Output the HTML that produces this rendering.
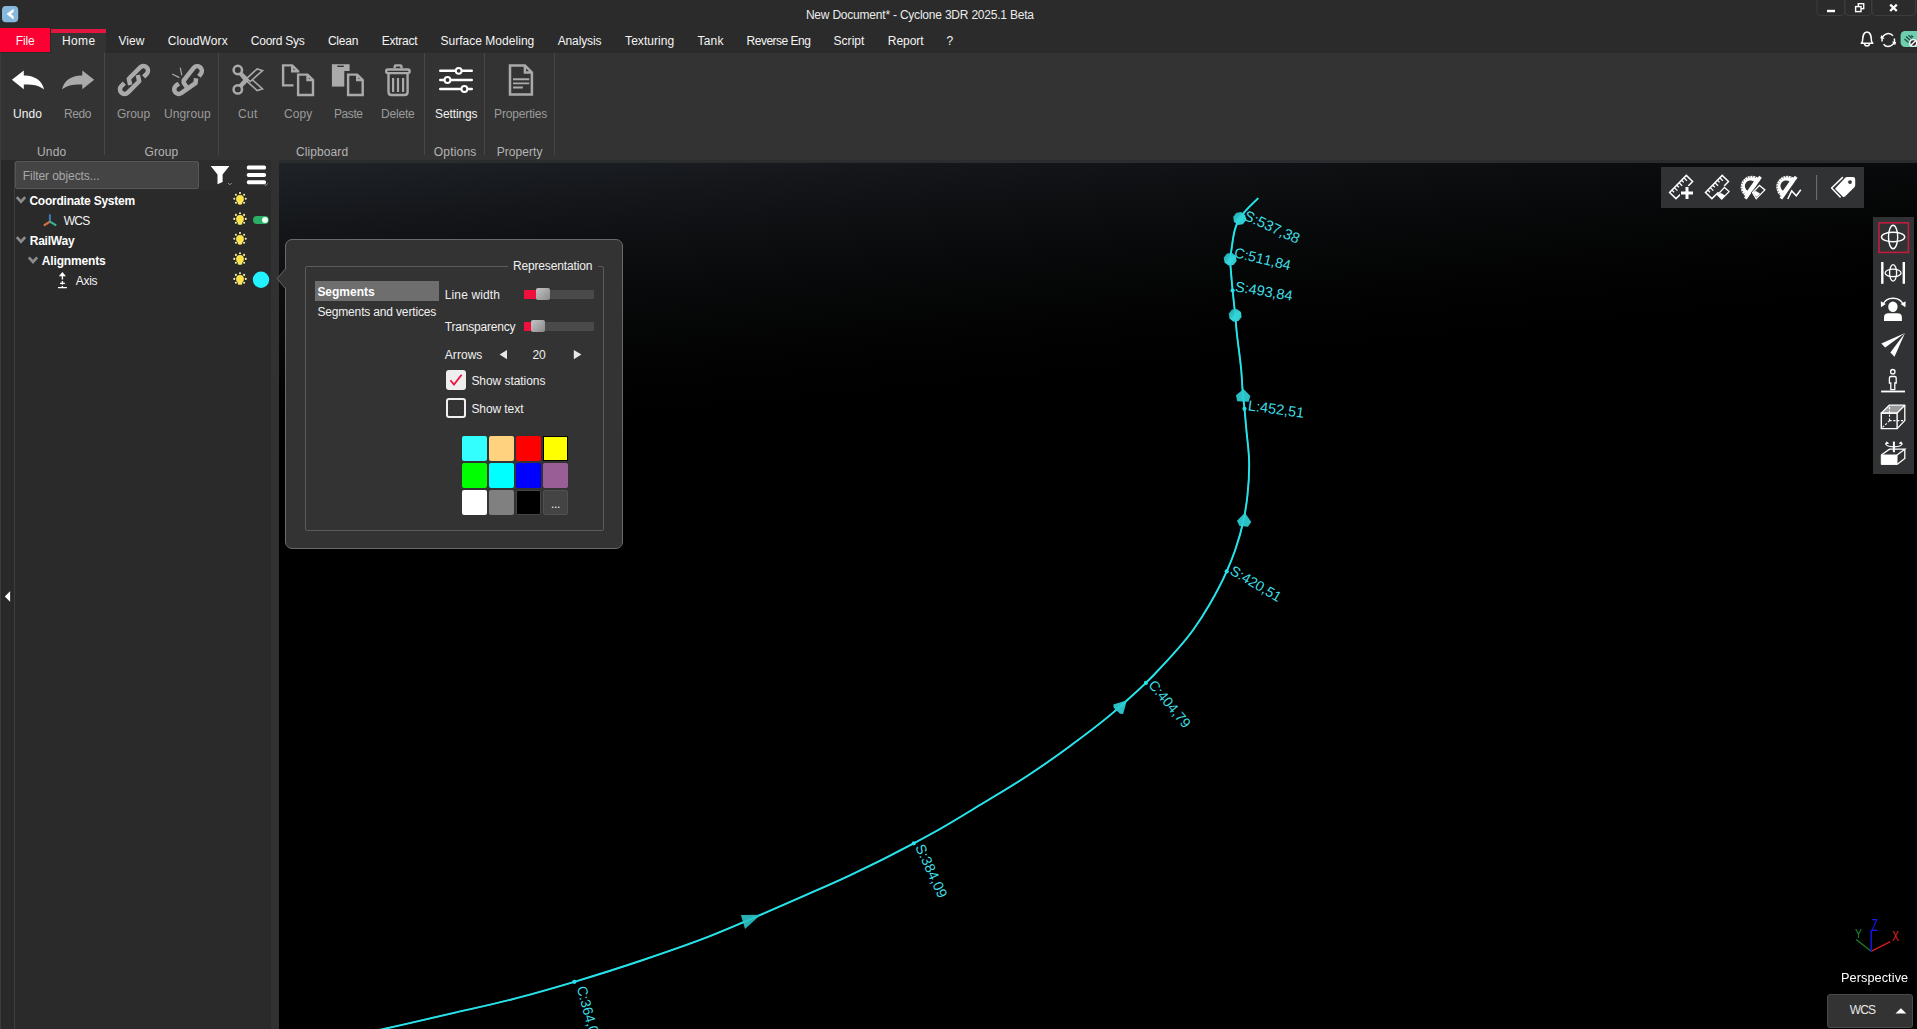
<!DOCTYPE html>
<html lang="en"><head><meta charset="utf-8"><title>New Document* - Cyclone 3DR 2025.1 Beta</title>
<style>
html,body{margin:0;padding:0;background:#000;}
body{width:1917px;height:1029px;position:relative;overflow:hidden;font-family:'Liberation Sans',sans-serif;font-size:12px;}
.a{position:absolute;}
.t{position:absolute;white-space:pre;line-height:normal;}
#titlebar{left:0;top:0;width:1917px;height:53px;background:#2b2b2b;}
#ribbon{left:0;top:53px;width:1917px;height:107px;background:#333333;}
#ribstrip{left:0;top:160px;width:1917px;height:3px;background:#2b2c2d;}
#filetab{left:0;top:28px;width:50px;height:24px;background:#fb0032;}
#hometab{left:51px;top:29px;width:55px;height:24px;background:#333333;}
#homebar{left:51px;top:29px;width:55px;height:4px;background:#e2163f;}
.sep{position:absolute;top:53px;width:1px;height:102px;background:#474747;}
#leftstrip{left:0;top:160px;width:15px;height:869px;background:#292929;}
#leftedge{left:0;top:53px;width:1px;height:976px;background:#3c3c3c;}
#leftline{left:14px;top:162px;width:1px;height:867px;background:#3e3e3e;}
#tree{left:15px;top:160px;width:256px;height:869px;background:#2a2a2a;}
#treehead{left:15px;top:160px;width:256px;height:30px;background:#2d2d2d;}
#splitter{left:271px;top:160px;width:8px;height:869px;background:#313131;}
#filter{left:15px;top:161px;width:184px;height:28px;background:#444444;border:1px solid #565656;box-sizing:border-box;border-radius:2px;}
#viewport{left:279px;top:163px;width:1638px;height:866px;background:#000;overflow:hidden;}
#vpgrad{left:0;top:0;width:1638px;height:866px;background:linear-gradient(174.4deg,rgb(31,35,40) 0.00%,rgb(25,28,32) 3.26%,rgb(20,22,26) 6.52%,rgb(15,17,20) 9.78%,rgb(11,13,14) 13.04%,rgb(8,9,10) 16.30%,rgb(5,6,6) 19.56%,rgb(3,3,4) 22.82%,rgb(1,1,2) 26.08%,rgb(0,0,0) 29.34%,rgb(0,0,0) 32.60%);}
#toptools{left:1661px;top:167px;width:203px;height:41px;background:#313234;}
#righttools{left:1873px;top:217px;width:41px;height:257px;background:#313234;}
#selbox{display:none;}
#wcsbox{left:1827px;top:994px;width:86px;height:34px;background:#333333;border:1px solid #4a4a4a;box-sizing:border-box;border-radius:3px;}
#popup{left:285px;top:239px;width:338px;height:310px;background:#333333;border:1px solid #6a6a6a;box-sizing:border-box;border-radius:7px;}
#grp{left:305px;top:266px;width:299px;height:265px;border:1px solid #5c5c5c;box-sizing:border-box;border-radius:2px;}
#grpgap{left:508px;top:264px;width:90px;height:5px;background:#333333;}
#selitem{left:315px;top:281px;width:124px;height:20px;background:#6e6e6e;}
.track{position:absolute;height:9px;background:#4a4a4a;border-radius:1px;}
.fill{position:absolute;height:9px;background:#f0103c;}
.knob{position:absolute;width:14px;height:12px;border-radius:2px;background:linear-gradient(135deg,#c4c4c4,#8a8a8a);}
.sw{position:absolute;width:25px;height:25px;border-radius:2px;box-sizing:border-box;}
#cb1{left:446px;top:370px;width:20px;height:20px;background:#eeeeee;border-radius:3px;}
#cb2{left:446px;top:398px;width:20px;height:20px;border:2px solid #f0f0f0;box-sizing:border-box;border-radius:3px;}
svg{position:absolute;left:0;top:0;overflow:visible;}

</style></head>
<body>
<div class="a" id="titlebar"></div>
<div class="a" id="filetab"></div>
<div class="a" id="hometab"></div>
<div class="a" id="homebar"></div>
<div class="a" id="ribbon"></div>
<div class="a" id="ribstrip"></div>
<div class="sep" style="left:104px"></div>
<div class="sep" style="left:218px"></div>
<div class="sep" style="left:424px"></div>
<div class="sep" style="left:484px"></div>
<div class="sep" style="left:554px"></div>
<div class="a" id="viewport"><div class="a" id="vpgrad"></div></div>
<div class="a" id="leftstrip"></div>
<div class="a" id="leftedge"></div>
<div class="a" id="tree"></div>
<div class="a" id="treehead"></div>
<div class="a" id="leftline"></div>
<div class="a" id="splitter"></div>
<div class="a" id="filter"></div>
<div class="a" id="toptools"></div>
<div class="a" id="righttools"></div>
<div class="a" id="selbox"></div>
<div class="a" id="wcsbox"></div>
<!--CURVE-->
<svg id="curve" width="1917" height="1029" viewBox="0 0 1917 1029"><defs><clipPath id="vpc"><rect x="279" y="163" width="1638" height="866"/></clipPath><linearGradient id="sph" x1="0" y1="0" x2="1" y2="1"><stop offset="0" stop-color="#1f9aa2"/><stop offset="0.55" stop-color="#34d6da"/><stop offset="1" stop-color="#2cc4ca"/></linearGradient></defs><g clip-path="url(#vpc)">
<path d="M1258.3,198.1 C1254.0,202.4 1249.3,206.4 1245.4,211.0 C1243.4,213.4 1241.2,215.8 1239.6,218.5 C1238.3,220.7 1237.2,223.2 1236.2,225.6 C1233.2,233.1 1232.7,241.4 1231.5,249.4 C1231.0,252.6 1230.3,255.8 1230.2,259.0 C1230.0,262.9 1230.6,266.7 1230.9,270.6 C1231.4,277.2 1232.0,283.9 1232.6,290.5 C1233.4,298.7 1234.4,306.8 1235.2,315.0 C1235.7,320.0 1236.0,325.0 1236.5,330.0 C1237.8,343.4 1240.0,356.6 1241.2,370.0 C1242.0,378.5 1242.2,387.1 1243.0,395.6 C1243.4,400.0 1244.0,404.3 1244.5,408.7 C1245.2,415.8 1245.8,422.9 1246.4,430.0 C1247.3,440.3 1248.9,450.7 1249.1,461.0 C1249.4,472.3 1248.7,483.7 1247.5,495.0 C1246.6,503.4 1245.3,511.8 1243.6,520.0 C1241.5,530.1 1238.6,540.2 1235.2,550.0 C1232.7,557.2 1229.8,564.4 1226.7,571.4 C1221.8,582.5 1216.1,593.2 1210.0,603.7 C1204.8,612.7 1199.2,621.6 1193.1,630.0 C1182.8,644.3 1170.6,657.2 1158.5,670.0 C1154.4,674.4 1150.2,678.7 1145.9,682.9 C1139.8,688.9 1133.4,694.6 1127.0,700.3 C1122.5,704.4 1118.0,708.4 1113.4,712.4 C1099.9,724.0 1085.5,734.6 1071.2,745.2 C1056.9,755.8 1042.4,766.0 1027.5,775.8 C1013.2,785.2 998.4,793.9 983.7,802.8 C969.2,811.6 954.8,820.6 940.0,829.0 C931.3,833.9 922.6,838.6 913.8,843.3 C892.8,854.5 871.5,865.2 850.0,875.3 C833.5,883.1 816.7,890.2 800.0,897.6 C784.7,904.4 769.4,911.1 754.0,917.7 C739.4,923.9 724.8,930.3 710.0,936.1 C687.9,944.8 665.4,952.4 642.9,960.0 C620.2,967.7 597.4,974.9 574.4,981.8 C553.5,988.0 532.6,994.1 511.5,999.5 C492.8,1004.3 473.9,1008.3 455.1,1012.6 C431.3,1018.1 407.6,1023.7 383.8,1029.0 C369.2,1032.2 354.6,1035.3 340.0,1038.5" fill="none" stroke="#27e3ea" stroke-width="1.9"/>
<polygon transform="translate(1239.6,218.5)" points="6.4,1.7 3.3,5.7 -1.7,6.4 -5.7,3.3 -6.4,-1.7 -3.3,-5.7 1.7,-6.4 5.7,-3.3" fill="url(#sph)"/>
<polygon transform="translate(1230.2,259.2)" points="6.4,1.7 3.3,5.7 -1.7,6.4 -5.7,3.3 -6.4,-1.7 -3.3,-5.7 1.7,-6.4 5.7,-3.3" fill="url(#sph)"/>
<polygon transform="translate(1235.2,315.3)" points="6.4,1.7 3.3,5.7 -1.7,6.4 -5.7,3.3 -6.4,-1.7 -3.3,-5.7 1.7,-6.4 5.7,-3.3" fill="url(#sph)"/>
<polygon transform="translate(1243.2,395.5) rotate(3)" points="0,-6.5 7.2,0.2 5.7,6 -5.7,6 -7.2,0.2" fill="#2cc0c6"/>
<polygon transform="translate(1244.3,519.7) rotate(5)" points="0,-7 7.2,1.8 4.2,6.7 -4.2,6.7 -7.2,1.8" fill="#2cc0c6"/>
<polygon transform="translate(1121.9,705.5) rotate(44)" points="0,-7.3 6.8,5.3 4.4,7.3 -4.4,7.3 -6.8,5.3" fill="#2cc0c6"/>
<polygon points="740.9,915.1 760.7,914.8 745,929.1" fill="#28b0b2"/>
<path d="M1258.3,198.1 C1254.0,202.4 1249.3,206.4 1245.4,211.0 C1243.4,213.4 1241.2,215.8 1239.6,218.5 C1238.3,220.7 1237.2,223.2 1236.2,225.6 C1233.2,233.1 1232.7,241.4 1231.5,249.4 C1231.0,252.6 1230.3,255.8 1230.2,259.0 C1230.0,262.9 1230.6,266.7 1230.9,270.6 C1231.4,277.2 1232.0,283.9 1232.6,290.5 C1233.4,298.7 1234.4,306.8 1235.2,315.0 C1235.7,320.0 1236.0,325.0 1236.5,330.0 C1237.8,343.4 1240.0,356.6 1241.2,370.0 C1242.0,378.5 1242.2,387.1 1243.0,395.6 C1243.4,400.0 1244.0,404.3 1244.5,408.7 C1245.2,415.8 1245.8,422.9 1246.4,430.0 C1247.3,440.3 1248.9,450.7 1249.1,461.0 C1249.4,472.3 1248.7,483.7 1247.5,495.0 C1246.6,503.4 1245.3,511.8 1243.6,520.0 C1241.5,530.1 1238.6,540.2 1235.2,550.0 C1232.7,557.2 1229.8,564.4 1226.7,571.4 C1221.8,582.5 1216.1,593.2 1210.0,603.7 C1204.8,612.7 1199.2,621.6 1193.1,630.0 C1182.8,644.3 1170.6,657.2 1158.5,670.0 C1154.4,674.4 1150.2,678.7 1145.9,682.9 C1139.8,688.9 1133.4,694.6 1127.0,700.3 C1122.5,704.4 1118.0,708.4 1113.4,712.4 C1099.9,724.0 1085.5,734.6 1071.2,745.2 C1056.9,755.8 1042.4,766.0 1027.5,775.8 C1013.2,785.2 998.4,793.9 983.7,802.8 C969.2,811.6 954.8,820.6 940.0,829.0 C931.3,833.9 922.6,838.6 913.8,843.3 C892.8,854.5 871.5,865.2 850.0,875.3 C833.5,883.1 816.7,890.2 800.0,897.6 C784.7,904.4 769.4,911.1 754.0,917.7 C739.4,923.9 724.8,930.3 710.0,936.1 C687.9,944.8 665.4,952.4 642.9,960.0 C620.2,967.7 597.4,974.9 574.4,981.8 C553.5,988.0 532.6,994.1 511.5,999.5 C492.8,1004.3 473.9,1008.3 455.1,1012.6 C431.3,1018.1 407.6,1023.7 383.8,1029.0 C369.2,1032.2 354.6,1035.3 340.0,1038.5" fill="none" stroke="#27e3ea" stroke-width="1.6" opacity="0.55"/>
<circle cx="1232.6" cy="290.5" r="2.1" fill="#27e3ea"/>
<circle cx="1244.5" cy="408.8" r="2.1" fill="#27e3ea"/>
<circle cx="1226.7" cy="571.4" r="2.1" fill="#27e3ea"/>
<circle cx="1145.9" cy="682.9" r="2.1" fill="#27e3ea"/>
<circle cx="913.8" cy="843.3" r="2.1" fill="#27e3ea"/>
<circle cx="574.4" cy="981.8" r="2.1" fill="#27e3ea"/>
<text transform="translate(1243.1,219.2) rotate(24.8)" font-family="'Liberation Sans',sans-serif" font-size="14.8" fill="#3fdde3" style="font-kerning:none">S:537,38</text>
<text transform="translate(1233.5,257.1) rotate(13.3)" font-family="'Liberation Sans',sans-serif" font-size="14.2" fill="#3fdde3" style="font-kerning:none">C:511,84</text>
<text transform="translate(1234.5,291.2) rotate(9.6)" font-family="'Liberation Sans',sans-serif" font-size="14.5" fill="#3fdde3" style="font-kerning:none">S:493,84</text>
<text transform="translate(1247.6,410.2) rotate(7.8)" font-family="'Liberation Sans',sans-serif" font-size="14.5" fill="#3fdde3" style="font-kerning:none">L:452,51</text>
<text transform="translate(1228.9,573.4) rotate(30.6)" font-family="'Liberation Sans',sans-serif" font-size="14.2" fill="#3fdde3" style="font-kerning:none">S:420,51</text>
<text transform="translate(1147.8,685.3) rotate(50.2)" font-family="'Liberation Sans',sans-serif" font-size="14.04" fill="#3fdde3" style="font-kerning:none">C:404,79</text>
<text transform="translate(915.1,846.9) rotate(65.5)" font-family="'Liberation Sans',sans-serif" font-size="14.3" fill="#3fdde3" style="font-kerning:none">S:384,09</text>
<text transform="translate(576.7,987.5) rotate(75)" font-family="'Liberation Sans',sans-serif" font-size="14" fill="#3fdde3" style="font-kerning:none">C:364,09</text>
</g></svg>

<div class="a" id="popup"></div>
<div class="a" id="grp"></div>
<div class="a" id="grpgap"></div>
<div class="a" id="selitem"></div>
<div class="track" style="left:524px;top:290px;width:70px"></div>
<div class="fill" style="left:524px;top:290px;width:13px"></div>
<div class="knob" style="left:536px;top:288px"></div>
<div class="track" style="left:524px;top:322px;width:70px"></div>
<div class="fill" style="left:524px;top:322px;width:9px"></div>
<div class="knob" style="left:531px;top:320px"></div>
<div class="a" id="cb1"></div>
<div class="a" id="cb2"></div>
<div class="sw" style="left:462.4px;top:436.3px;background:#33ffff"></div>
<div class="sw" style="left:489.4px;top:436.3px;background:#ffd27f"></div>
<div class="sw" style="left:516.4px;top:436.3px;background:#ff0000"></div>
<div class="sw" style="left:543.4px;top:436.3px;background:#ffff00;border:1px solid #000;border-radius:0"></div>
<div class="sw" style="left:462.4px;top:463.3px;background:#00ff00"></div>
<div class="sw" style="left:489.4px;top:463.3px;background:#00ffff"></div>
<div class="sw" style="left:516.4px;top:463.3px;background:#0000ff"></div>
<div class="sw" style="left:543.4px;top:463.3px;background:#9a5e96"></div>
<div class="sw" style="left:462.4px;top:490.3px;background:#ffffff"></div>
<div class="sw" style="left:489.4px;top:490.3px;background:#808080"></div>
<div class="sw" style="left:516.4px;top:490.3px;background:#000000;border:1px solid #444"></div>
<div class="sw" style="left:543.4px;top:490.3px;background:#444444;border:1px solid #505050"></div>
<svg id="icons" width="1917" height="1029" viewBox="0 0 1917 1029">
<rect x="2" y="6" width="16.2" height="16.2" rx="4" fill="#86b8dc"/>
<path d="M13.6,8.8 L6.6,14.1 L13.6,19.4 L13.6,16.2 L10.8,14.1 L13.6,12 Z" fill="#fff"/>
<path d="M1817,-1 V12 Q1817,15.5 1820.5,15.5 H1841.0 Q1844.5,15.5 1844.5,12 V-1" fill="none" stroke="#3d3d3d" stroke-width="1"/>
<path d="M1845,-1 V12 Q1845,15.5 1848.5,15.5 H1868.0 Q1871.5,15.5 1871.5,12 V-1" fill="none" stroke="#3d3d3d" stroke-width="1"/>
<path d="M1872,-1 V12 Q1872,15.5 1875.5,15.5 H1912.0 Q1915.5,15.5 1915.5,12 V-1" fill="none" stroke="#3d3d3d" stroke-width="1"/>
<rect x="1827" y="9.8" width="8" height="2.4" fill="#fff"/>
<rect x="1858.3" y="3.7" width="5.4" height="5" fill="none" stroke="#fff" stroke-width="1.4"/>
<rect x="1855.6" y="6.6" width="5.4" height="5" fill="#2b2b2b" stroke="#fff" stroke-width="1.4"/>
<path d="M1890.2,4.6 L1896.8,11 M1896.8,4.6 L1890.2,11" stroke="#fff" stroke-width="2.3" fill="none"/>
<path d="M1861.2,43.2 H1872.8 L1871.6,41.6 C1871,38 1871.6,32 1867,32 C1862.4,32 1863,38 1862.4,41.6 Z" fill="none" stroke="#fff" stroke-width="1.5" stroke-linejoin="round"/>
<path d="M1864.4,44 A2.7,2.7 0 0 0 1869.6,44" fill="none" stroke="#fff" stroke-width="1.5"/>
<path d="M1882.2,41.5 A6.3,6.3 0 0 1 1893,35.8" fill="none" stroke="#fff" stroke-width="1.5"/>
<path d="M1894.3,38.5 A6.3,6.3 0 0 1 1883.5,44.2" fill="none" stroke="#fff" stroke-width="1.5"/>
<path d="M1880.3,38.3 L1884.6,38.9 L1881.4,35 Z" fill="#fff"/>
<path d="M1896.2,42 L1891.9,41.4 L1895.1,45.3 Z" fill="#fff"/>
<rect x="1900.6" y="31" width="22" height="16" rx="4.5" fill="#6ecfb0"/>
<path d="M1904.5,39 l4,3.5 M1906,36.5 l4.5,4 M1908.5,35.2 l3.5,3.2 M1911.2,35.5 l2,1.8" stroke="#1e4a3c" stroke-width="1.2" fill="none"/>
<circle cx="1913.2" cy="43" r="3.4" fill="#2b2b2b" stroke="#fff" stroke-width="1.3"/>
<path d="M1910.9,45.2 L1915.5,40.8" stroke="#fff" stroke-width="1.3"/>
<path d="M11.9,79.8 L23.8,70.4 L23.8,75.5 C34.5,75.2 42.3,80.5 44.1,89.6 C39.5,85.3 32.5,84.2 23.8,84.4 L23.8,89.2 Z" fill="#fff"/>
<path d="M11.9,79.8 L23.8,70.4 L23.8,75.5 C34.5,75.2 42.3,80.5 44.1,89.6 C39.5,85.3 32.5,84.2 23.8,84.4 L23.8,89.2 Z" fill="#aaaaaa" transform="translate(106.1,0) scale(-1,1)"/>
<path d="M143.64,76.87 L146.67,73.85 A4.58,4.58 0 0 0 140.19,67.37 L128.8,78.76 L130.2,84.9" fill="none" stroke="#aaaaaa" stroke-width="4.5" stroke-linejoin="round"/>
<path d="M143.64,76.87 L146.67,73.85 A4.58,4.58 0 0 0 140.19,67.37 L128.8,78.76 L130.2,84.9" fill="none" stroke="#aaaaaa" stroke-width="4.5" stroke-linejoin="round" transform="rotate(180 134 80)"/>
<path d="M198.97,76.38 L201.18,73.23 A4.58,4.58 0 0 0 193.69,67.98 L183.7,80.5 L183.7,82.8 L186.6,87.0" fill="none" stroke="#aaaaaa" stroke-width="4.5" stroke-linejoin="round"/>
<path d="M178.85,83.69 L175.98,85.69 A4.58,4.58 0 0 0 181.23,93.18 L195.5,83.2 L196.1,78.2" fill="none" stroke="#aaaaaa" stroke-width="4.5" stroke-linejoin="round"/>
<path d="M180.32,68.12 L181.72,74.95 M172.62,74.25 L178.92,77.4" stroke="#aaa" stroke-width="1.2" fill="none" stroke-linecap="round"/>
<circle cx="237.8" cy="70" r="4.2" fill="none" stroke="#aaaaaa" stroke-width="2.5"/>
<circle cx="237.8" cy="89.4" r="4.2" fill="none" stroke="#aaaaaa" stroke-width="2.5"/>
<path d="M240.4,73.2 L246.8,80.2 M240.4,86.2 L246.8,79.2" stroke="#aaaaaa" stroke-width="4.4" fill="none"/>
<path d="M246.2,80.6 L257.1,90.5 L262.5,88.9 L250.3,77.9 Z" fill="#333333" stroke="#aaaaaa" stroke-width="1.6" stroke-linejoin="miter"/>
<path d="M246.2,78.8 L257.1,68.9 L262.5,70.5 L250.3,81.5 Z" fill="#333333" stroke="#aaaaaa" stroke-width="1.6" stroke-linejoin="miter"/>
<path d="M243.2,76.4 L247.6,81 " stroke="#aaaaaa" stroke-width="4.4" fill="none"/>
<path d="M293.5,85.4 H283.1 V65.4 H292.2 L298.1,71.3 V72.5 M292.2,65.4 V71.3 H298.1" fill="none" stroke="#aaaaaa" stroke-width="2.4"/>
<path d="M298.1,74.6 H307.5 L313,80.1 V95 H298.1 Z M307.5,74.6 V80.1 H313" fill="#333333" stroke="#aaaaaa" stroke-width="2.4" stroke-linejoin="miter"/>
<rect x="331.9" y="64.2" width="17.7" height="22.4" fill="#aaaaaa"/>
<rect x="337.3" y="65.6" width="6.5" height="1.4" fill="#333333"/>
<rect x="344.3" y="71" width="22" height="27" fill="#333333"/>
<path d="M348.1,74.6 H357.2 L362.7,80.1 V95 H348.1 Z M357.2,74.6 V80.1 H362.7" fill="#333333" stroke="#aaaaaa" stroke-width="2.4" stroke-linejoin="miter"/>
<path d="M394.7,68.3 V66.6 Q394.7,65.4 395.9,65.4 H400.3 Q401.5,65.4 401.5,66.6 V68.3" fill="none" stroke="#aaaaaa" stroke-width="2.4"/>
<rect x="386.2" y="69.5" width="23.4" height="3.6" rx="1.6" fill="none" stroke="#aaaaaa" stroke-width="2.4"/>
<path d="M388.5,74 V92 Q388.5,95 391.5,95 H404.6 Q407.6,95 407.6,92 V74" fill="none" stroke="#aaaaaa" stroke-width="2.4"/>
<path d="M393.1,78.1 V92.1 M398,78.1 V92.1 M403.1,78.1 V92.1" stroke="#aaaaaa" stroke-width="2.2"/>
<path d="M440.2,70.8 H471.8" stroke="#fff" stroke-width="2.4" stroke-linecap="round"/>
<circle cx="458.7" cy="70.8" r="2.9" fill="#333333" stroke="#fff" stroke-width="2"/>
<path d="M440.2,80 H471.8" stroke="#fff" stroke-width="2.4" stroke-linecap="round"/>
<circle cx="447.5" cy="80" r="2.9" fill="#333333" stroke="#fff" stroke-width="2"/>
<path d="M440.2,89 H471.8" stroke="#fff" stroke-width="2.4" stroke-linecap="round"/>
<circle cx="464.4" cy="89" r="2.9" fill="#333333" stroke="#fff" stroke-width="2"/>
<path d="M510,65.4 H524.9 L531.9,72.4 V94.6 H510 Z M524.9,65.4 V72.4 H531.9" fill="none" stroke="#aaaaaa" stroke-width="2.5" stroke-linejoin="miter"/>
<path d="M513,79.2 H529.2 M513,83.4 H529.2 M513,87.5 H522.9" stroke="#aaaaaa" stroke-width="1.9"/>
<path d="M210.7,166 H229.4 L222.6,174.5 V182 L217.5,184.2 V174.5 Z" fill="#fff"/>
<path d="M228,183 L229.8,184.8 L231.6,183" stroke="#999" stroke-width="1" fill="none"/>
<rect x="246.8" y="165.6" width="19.2" height="4" rx="1.6" fill="#fff"/>
<rect x="246.8" y="172.9" width="19.2" height="4" rx="1.6" fill="#fff"/>
<rect x="246.8" y="180.2" width="19.2" height="4" rx="1.6" fill="#fff"/>
<path d="M264.2,184 L265.8,185.6 L267.6,183.4" stroke="#999" stroke-width="1" fill="none"/>
<path d="M16.8,197.1 L21,201.7 L25.2,197.1" stroke="#8c8c8c" stroke-width="2.7" fill="none"/>
<path d="M16.8,237.1 L21,241.7 L25.2,237.1" stroke="#8c8c8c" stroke-width="2.7" fill="none"/>
<path d="M28.8,257.3 L33,261.90000000000003 L37.2,257.3" stroke="#8c8c8c" stroke-width="2.7" fill="none"/>
<path d="M49.9,221.6 V214.3" stroke="#3c79b5" stroke-width="2.1"/>
<path d="M49.9,221.6 L43.8,225.5" stroke="#d4713b" stroke-width="2.1"/>
<path d="M49.9,221.6 L56.2,225.3" stroke="#36b89c" stroke-width="2.1"/>
<path d="M62.4,272 L66,276.3 H58.8 Z" fill="#fff"/>
<path d="M62.4,276 V287.5" stroke="#fff" stroke-width="1.4" stroke-dasharray="3.4,1.6"/>
<path d="M60,283.3 H64.9 M58,287.7 H66.9" stroke="#fff" stroke-width="1.3"/>
<g transform="translate(240,198.7)"><circle cx="0" cy="0.2" r="3.9" fill="#fde34a"/><path d="M-2.2,2.5 H2.2 V5.4 Q0,6.6 -2.2,5.4 Z" fill="#fbe565"/><circle cx="0" cy="-5.6" r="1.05" fill="#f6eeae"/><circle cx="-4.1" cy="-3.9" r="1.05" fill="#f6eeae"/><circle cx="4.1" cy="-3.9" r="1.05" fill="#f6eeae"/><circle cx="-5.7" cy="0.1" r="1.05" fill="#f6eeae"/><circle cx="5.7" cy="0.1" r="1.05" fill="#f6eeae"/><circle cx="-4.1" cy="4" r="1.05" fill="#f6eeae"/><circle cx="4.1" cy="4" r="1.05" fill="#f6eeae"/></g>
<g transform="translate(240,218.8)"><circle cx="0" cy="0.2" r="3.9" fill="#fde34a"/><path d="M-2.2,2.5 H2.2 V5.4 Q0,6.6 -2.2,5.4 Z" fill="#fbe565"/><circle cx="0" cy="-5.6" r="1.05" fill="#f6eeae"/><circle cx="-4.1" cy="-3.9" r="1.05" fill="#f6eeae"/><circle cx="4.1" cy="-3.9" r="1.05" fill="#f6eeae"/><circle cx="-5.7" cy="0.1" r="1.05" fill="#f6eeae"/><circle cx="5.7" cy="0.1" r="1.05" fill="#f6eeae"/><circle cx="-4.1" cy="4" r="1.05" fill="#f6eeae"/><circle cx="4.1" cy="4" r="1.05" fill="#f6eeae"/></g>
<g transform="translate(240,238.7)"><circle cx="0" cy="0.2" r="3.9" fill="#fde34a"/><path d="M-2.2,2.5 H2.2 V5.4 Q0,6.6 -2.2,5.4 Z" fill="#fbe565"/><circle cx="0" cy="-5.6" r="1.05" fill="#f6eeae"/><circle cx="-4.1" cy="-3.9" r="1.05" fill="#f6eeae"/><circle cx="4.1" cy="-3.9" r="1.05" fill="#f6eeae"/><circle cx="-5.7" cy="0.1" r="1.05" fill="#f6eeae"/><circle cx="5.7" cy="0.1" r="1.05" fill="#f6eeae"/><circle cx="-4.1" cy="4" r="1.05" fill="#f6eeae"/><circle cx="4.1" cy="4" r="1.05" fill="#f6eeae"/></g>
<g transform="translate(240,258.8)"><circle cx="0" cy="0.2" r="3.9" fill="#fde34a"/><path d="M-2.2,2.5 H2.2 V5.4 Q0,6.6 -2.2,5.4 Z" fill="#fbe565"/><circle cx="0" cy="-5.6" r="1.05" fill="#f6eeae"/><circle cx="-4.1" cy="-3.9" r="1.05" fill="#f6eeae"/><circle cx="4.1" cy="-3.9" r="1.05" fill="#f6eeae"/><circle cx="-5.7" cy="0.1" r="1.05" fill="#f6eeae"/><circle cx="5.7" cy="0.1" r="1.05" fill="#f6eeae"/><circle cx="-4.1" cy="4" r="1.05" fill="#f6eeae"/><circle cx="4.1" cy="4" r="1.05" fill="#f6eeae"/></g>
<g transform="translate(240,278.8)"><circle cx="0" cy="0.2" r="3.9" fill="#fde34a"/><path d="M-2.2,2.5 H2.2 V5.4 Q0,6.6 -2.2,5.4 Z" fill="#fbe565"/><circle cx="0" cy="-5.6" r="1.05" fill="#f6eeae"/><circle cx="-4.1" cy="-3.9" r="1.05" fill="#f6eeae"/><circle cx="4.1" cy="-3.9" r="1.05" fill="#f6eeae"/><circle cx="-5.7" cy="0.1" r="1.05" fill="#f6eeae"/><circle cx="5.7" cy="0.1" r="1.05" fill="#f6eeae"/><circle cx="-4.1" cy="4" r="1.05" fill="#f6eeae"/><circle cx="4.1" cy="4" r="1.05" fill="#f6eeae"/></g>
<rect x="253" y="216" width="15.8" height="8" rx="4" fill="#2bae66"/>
<circle cx="265" cy="220" r="3" fill="#eafff2"/>
<circle cx="261" cy="279.7" r="8.2" fill="#22f2ff"/>
<path d="M4.8,596.5 L10.1,591.2 V601.8 Z" fill="#fff"/>
<g transform="translate(0,0)"><path d="M1682.6,192.2 L1676,198.6 L1669.6,192.5 L1686.3,175.4 L1692.6,181.5 L1688.2,186" fill="none" stroke="#fff" stroke-width="1.5" stroke-linejoin="miter"/><path d="M1672.0,190.1 L1674.1,192.2" stroke="#fff" stroke-width="1.3"/><path d="M1674.4,187.6 L1677.4,190.6" stroke="#fff" stroke-width="1.3"/><path d="M1676.8,185.2 L1678.9,187.3" stroke="#fff" stroke-width="1.3"/><path d="M1679.1,182.7 L1682.1,185.7" stroke="#fff" stroke-width="1.3"/><path d="M1681.5,180.3 L1683.7,182.4" stroke="#fff" stroke-width="1.3"/><path d="M1683.9,177.8 L1686.9,180.8" stroke="#fff" stroke-width="1.3"/></g>
<path d="M1680,193 H1694 M1687,186 V200" stroke="#313234" stroke-width="5.6"/>
<path d="M1681,193 H1693 M1687,187 V199" stroke="#fff" stroke-width="3"/>
<g transform="translate(35.9,0)"><path d="M1682.6,192.2 L1676,198.6 L1669.6,192.5 L1686.3,175.4 L1692.6,181.5 L1688.2,186" fill="none" stroke="#fff" stroke-width="1.5" stroke-linejoin="miter"/><path d="M1672.0,190.1 L1674.1,192.2" stroke="#fff" stroke-width="1.3"/><path d="M1674.4,187.6 L1677.4,190.6" stroke="#fff" stroke-width="1.3"/><path d="M1676.8,185.2 L1678.9,187.3" stroke="#fff" stroke-width="1.3"/><path d="M1679.1,182.7 L1682.1,185.7" stroke="#fff" stroke-width="1.3"/><path d="M1681.5,180.3 L1683.7,182.4" stroke="#fff" stroke-width="1.3"/><path d="M1683.9,177.8 L1686.9,180.8" stroke="#fff" stroke-width="1.3"/></g>
<g transform="translate(1724.5,187.4)"><path d="M0,0 L4.6,4.2 L-2.8,11.6 L-7,7.3 Z" fill="none" stroke="#fff" stroke-width="1.3"/><path d="M-7,7.3 L-2.8,11.6 L0.6,8.2 L-3.6,5.5 Z" fill="#fff"/></g>
<g transform="translate(0,0)"><g transform="translate(1751.9,187.0) rotate(-55.167775487411156)"><path d="M-11.2,0 A11.2,11.2 0 0 1 11.2,0 Z" fill="#fff"/><rect x="-13.3" y="-0.4" width="26.6" height="3.3" fill="#fff"/><path d="M-5.7,-1.6 A5.7,5.7 0 0 1 5.7,-1.6 Z" fill="#313234"/><path d="M-9.37,-2.51 L-11.01,-2.95" stroke="#313234" stroke-width="0.7"/><path d="M-8.40,-4.85 L-9.87,-5.70" stroke="#313234" stroke-width="0.7"/><path d="M-6.86,-6.86 L-8.06,-8.06" stroke="#313234" stroke-width="0.7"/><path d="M-4.85,-8.40 L-5.70,-9.87" stroke="#313234" stroke-width="0.7"/><path d="M-2.51,-9.37 L-2.95,-11.01" stroke="#313234" stroke-width="0.7"/><path d="M-0.00,-9.70 L-0.00,-11.40" stroke="#313234" stroke-width="0.7"/><path d="M2.51,-9.37 L2.95,-11.01" stroke="#313234" stroke-width="0.7"/><path d="M4.85,-8.40 L5.70,-9.87" stroke="#313234" stroke-width="0.7"/><path d="M6.86,-6.86 L8.06,-8.06" stroke="#313234" stroke-width="0.7"/><path d="M8.40,-4.85 L9.87,-5.70" stroke="#313234" stroke-width="0.7"/><path d="M9.37,-2.51 L11.01,-2.95" stroke="#313234" stroke-width="0.7"/></g></g>
<path d="M1759.3,185.2 L1764.9,189.9 L1756.1,198.7 L1752.3,192.7 Z" fill="#313234" stroke="#313234" stroke-width="2.2"/>
<g transform="translate(1759.5,185.4)"><path d="M0,0 L5.4,4.5 L-3.3,13.2 L-7,7.3 Z" fill="none" stroke="#fff" stroke-width="1.3"/><path d="M-7,7.3 L-2.8,11.6 L0.6,8.2 L-3.6,5.5 Z" fill="#fff"/></g>
<g transform="translate(35.6,0)"><g transform="translate(1751.9,187.0) rotate(-55.167775487411156)"><path d="M-11.2,0 A11.2,11.2 0 0 1 11.2,0 Z" fill="#fff"/><rect x="-13.3" y="-0.4" width="26.6" height="3.3" fill="#fff"/><path d="M-5.7,-1.6 A5.7,5.7 0 0 1 5.7,-1.6 Z" fill="#313234"/><path d="M-9.37,-2.51 L-11.01,-2.95" stroke="#313234" stroke-width="0.7"/><path d="M-8.40,-4.85 L-9.87,-5.70" stroke="#313234" stroke-width="0.7"/><path d="M-6.86,-6.86 L-8.06,-8.06" stroke="#313234" stroke-width="0.7"/><path d="M-4.85,-8.40 L-5.70,-9.87" stroke="#313234" stroke-width="0.7"/><path d="M-2.51,-9.37 L-2.95,-11.01" stroke="#313234" stroke-width="0.7"/><path d="M-0.00,-9.70 L-0.00,-11.40" stroke="#313234" stroke-width="0.7"/><path d="M2.51,-9.37 L2.95,-11.01" stroke="#313234" stroke-width="0.7"/><path d="M4.85,-8.40 L5.70,-9.87" stroke="#313234" stroke-width="0.7"/><path d="M6.86,-6.86 L8.06,-8.06" stroke="#313234" stroke-width="0.7"/><path d="M8.40,-4.85 L9.87,-5.70" stroke="#313234" stroke-width="0.7"/><path d="M9.37,-2.51 L11.01,-2.95" stroke="#313234" stroke-width="0.7"/></g></g>
<path d="M1787.8,199 L1791.7,190.9 L1796.3,195.8 L1800.8,189.8" fill="none" stroke="#fff" stroke-width="1.5"/>
<rect x="1816" y="175" width="1.2" height="25" fill="#6a6a6a"/>
<path d="M1842.4,177.6 L1831.6,188 L1840.2,197" fill="none" stroke="#fff" stroke-width="1.5" stroke-linecap="round" stroke-linejoin="round"/>
<path d="M1835.6,188 L1845,177.9 Q1845.8,177 1847,177 H1853 Q1855.2,177 1855.2,179.2 V185.2 Q1855.2,186.4 1854.4,187.2 L1845,196.6 Q1843.8,197.6 1842.6,196.4 L1835.6,189.6 Q1834.8,188.8 1835.6,188 Z" fill="#fff"/>
<circle cx="1850" cy="182.1" r="1.9" fill="#313234"/>
<rect x="1879" y="222.8" width="29.4" height="29.6" fill="none" stroke="#c01c40" stroke-width="1.6"/>
<ellipse cx="1893.1" cy="237" rx="11.6" ry="4.7" fill="none" stroke="#fff" stroke-width="1.4"/>
<ellipse cx="1893.1" cy="237" rx="4.6" ry="11.7" fill="none" stroke="#fff" stroke-width="1.4"/>
<ellipse cx="1893.1" cy="272.9" rx="8" ry="3.8" fill="none" stroke="#fff" stroke-width="1.3"/>
<ellipse cx="1893.1" cy="272.9" rx="3.5" ry="8.3" fill="none" stroke="#fff" stroke-width="1.3"/>
<rect x="1881.1" y="262" width="2.4" height="21.8" fill="#fff"/><rect x="1902.6" y="262" width="2.4" height="21.8" fill="#fff"/>
<ellipse cx="1892.9" cy="306.7" rx="4.7" ry="5.3" fill="#fff"/>
<path d="M1884,321 V317.5 Q1884,313.3 1888.5,313.3 H1897.4 Q1901.9,313.3 1901.9,317.5 V321 Z" fill="#fff"/>
<path d="M1883,304.6 Q1885.5,298.2 1893,298.2 Q1900.5,298.2 1903.4,304.6" fill="none" stroke="#fff" stroke-width="1.5"/>
<path d="M1880.8,301.3 L1885.8,303.9 L1881,307.2 Z" fill="#fff"/><path d="M1905.6,301.3 L1900.6,303.9 L1905.4,307.2 Z" fill="#fff"/>
<path d="M1905,332.9 L1881.3,343.6 L1885.2,347.5 Z" fill="#fff"/><path d="M1905,332.9 L1890.4,352.5 L1894.5,356.7 Z" fill="#fff"/>
<circle cx="1892.8" cy="371.7" r="2.2" fill="none" stroke="#fff" stroke-width="1.3"/>
<path d="M1889.4,383 V378 Q1889.4,376.5 1890.9,376.5 H1894.7 Q1896.2,376.5 1896.2,378 V383 H1894.8 V389.6 H1890.8 V383 Z" fill="none" stroke="#fff" stroke-width="1.3"/>
<rect x="1881.1" y="390.6" width="23.9" height="1.8" fill="#fff"/>
<path d="M1881.3,413.1 L1889.2,405.2 H1904.8 L1897.1,413.1 Z" fill="#9a9a9a" stroke="#fff" stroke-width="1.3" stroke-linejoin="round"/>
<path d="M1881.3,413.1 H1897.1 V428.6 H1881.3 Z" fill="none" stroke="#fff" stroke-width="1.4"/>
<path d="M1904.8,405.2 V420.6 L1897.1,428.6" fill="none" stroke="#fff" stroke-width="1.3"/>
<path d="M1889.5,407 V420.6 M1889.5,420.6 H1903.5 M1889.5,420.6 L1882.5,427.5" fill="none" stroke="#fff" stroke-width="1.1" stroke-dasharray="2.2,1.6"/>
<path d="M1881.3,455 H1897 V464.4 H1881.3 Z" fill="#fff" stroke="#fff" stroke-width="1"/>
<path d="M1881.3,455 L1889.5,449.2 H1904.8 L1897,455" fill="none" stroke="#fff" stroke-width="1.3"/>
<path d="M1904.8,449.2 V458.5 L1897,464.4" fill="none" stroke="#fff" stroke-width="1.3"/>
<rect x="1892.9" y="441.6" width="2" height="10.6" fill="#fff"/>
<path d="M1886,443 Q1884.8,446.6 1893.9,446.9 Q1903,446.6 1901.8,443" fill="none" stroke="#fff" stroke-width="1.1"/>
<path d="M1885,444.4 L1886.6,441.2 L1889.2,443.6 Z" fill="#fff"/><path d="M1902.8,444.4 L1901.2,441.2 L1898.6,443.6 Z" fill="#fff"/>
<path d="M1871.2,951.4 L1856.2,939.5" stroke="#1d8a2e" stroke-width="1.2"/>
<path d="M1871.2,951.4 L1890.3,941.6" stroke="#e01b1b" stroke-width="1.2"/>
<path d="M1871.2,951.4 V930" stroke="#1414d8" stroke-width="1.6"/>
<text transform="translate(1855,937.6) scale(0.8,1)" font-family="'Liberation Sans',sans-serif" font-size="13" fill="#1f8f2f">Y</text>
<text transform="translate(1871.8,931.3) scale(0.62,1)" font-family="'Liberation Sans',sans-serif" font-size="15.8" fill="#1c1cf0">Z</text>
<text transform="translate(1892,940.7) scale(0.73,1)" font-family="'Liberation Sans',sans-serif" font-size="14" fill="#e22020">X</text>
<path d="M1895.5,1013.4 L1900.9,1008.3 L1906.3,1013.4 Z" fill="#fff"/>
<path d="M286,268.6 L277.2,278.6 L286,288.6 Z" fill="#333333"/>
<path d="M285.5,268.6 L277.2,278.6 L285.5,288.6" fill="none" stroke="#6a6a6a" stroke-width="1"/>
<path d="M450.4,380.2 L454,384.6 L461.6,374.8" fill="none" stroke="#ee1240" stroke-width="1.8"/>
<path d="M499.6,354.6 L507,350 V359.3 Z" fill="#e8e8e8"/>
<path d="M581.4,354.6 L573.8,350 V359.3 Z" fill="#e8e8e8"/></svg>


<div id="texts">
<span class="t" style="left:805.9px;top:8.14px;font-size:12px;font-weight:400;color:#ececec;letter-spacing:-0.211px;">New Document* - Cyclone 3DR 2025.1 Beta</span>
<span class="t" style="left:15.8px;top:34.14px;font-size:12px;font-weight:400;color:#f4f4f4;letter-spacing:-0.161px;">File</span>
<span class="t" style="left:62.0px;top:34.14px;font-size:12px;font-weight:400;color:#f4f4f4;letter-spacing:0.371px;">Home</span>
<span class="t" style="left:118.6px;top:34.14px;font-size:12px;font-weight:400;color:#f4f4f4;letter-spacing:-0.024px;">View</span>
<span class="t" style="left:167.7px;top:34.14px;font-size:12px;font-weight:400;color:#f4f4f4;letter-spacing:0.107px;">CloudWorx</span>
<span class="t" style="left:250.8px;top:34.14px;font-size:12px;font-weight:400;color:#f4f4f4;letter-spacing:-0.248px;">Coord Sys</span>
<span class="t" style="left:327.9px;top:34.14px;font-size:12px;font-weight:400;color:#f4f4f4;letter-spacing:-0.192px;">Clean</span>
<span class="t" style="left:381.7px;top:34.14px;font-size:12px;font-weight:400;color:#f4f4f4;letter-spacing:-0.235px;">Extract</span>
<span class="t" style="left:440.4px;top:34.14px;font-size:12px;font-weight:400;color:#f4f4f4;letter-spacing:0.032px;">Surface Modeling</span>
<span class="t" style="left:557.7px;top:34.14px;font-size:12px;font-weight:400;color:#f4f4f4;letter-spacing:-0.123px;">Analysis</span>
<span class="t" style="left:625.1px;top:34.14px;font-size:12px;font-weight:400;color:#f4f4f4;letter-spacing:0.044px;">Texturing</span>
<span class="t" style="left:697.6px;top:34.14px;font-size:12px;font-weight:400;color:#f4f4f4;letter-spacing:0.160px;">Tank</span>
<span class="t" style="left:746.6px;top:34.14px;font-size:12px;font-weight:400;color:#f4f4f4;letter-spacing:-0.507px;">Reverse Eng</span>
<span class="t" style="left:833.5px;top:34.14px;font-size:12px;font-weight:400;color:#f4f4f4;letter-spacing:0.052px;">Script</span>
<span class="t" style="left:887.8px;top:34.14px;font-size:12px;font-weight:400;color:#f4f4f4;letter-spacing:-0.055px;">Report</span>
<span class="t" style="left:946.5px;top:34.14px;font-size:12px;font-weight:400;color:#f4f4f4;letter-spacing:-0.988px;">?</span>
<span class="t" style="left:13.0px;top:107.14px;font-size:12px;font-weight:400;color:#f2f2f2;letter-spacing:0.053px;">Undo</span>
<span class="t" style="left:64.0px;top:107.14px;font-size:12px;font-weight:400;color:#9b9b9b;letter-spacing:-0.447px;">Redo</span>
<span class="t" style="left:117.0px;top:107.14px;font-size:12px;font-weight:400;color:#9b9b9b;letter-spacing:-0.072px;">Group</span>
<span class="t" style="left:163.9px;top:107.14px;font-size:12px;font-weight:400;color:#9b9b9b;letter-spacing:0.124px;">Ungroup</span>
<span class="t" style="left:238.1px;top:107.14px;font-size:12px;font-weight:400;color:#9b9b9b;letter-spacing:0.238px;">Cut</span>
<span class="t" style="left:284.0px;top:107.14px;font-size:12px;font-weight:400;color:#9b9b9b;letter-spacing:0.046px;">Copy</span>
<span class="t" style="left:334.0px;top:107.14px;font-size:12px;font-weight:400;color:#9b9b9b;letter-spacing:-0.418px;">Paste</span>
<span class="t" style="left:381.0px;top:107.14px;font-size:12px;font-weight:400;color:#9b9b9b;letter-spacing:-0.181px;">Delete</span>
<span class="t" style="left:435.0px;top:107.14px;font-size:12px;font-weight:400;color:#f2f2f2;letter-spacing:-0.107px;">Settings</span>
<span class="t" style="left:494.1px;top:107.14px;font-size:12px;font-weight:400;color:#9b9b9b;letter-spacing:-0.160px;">Properties</span>
<span class="t" style="left:37.0px;top:145.14px;font-size:12px;font-weight:400;color:#b4b4b4;letter-spacing:0.153px;">Undo</span>
<span class="t" style="left:144.6px;top:145.14px;font-size:12px;font-weight:400;color:#b4b4b4;letter-spacing:0.048px;">Group</span>
<span class="t" style="left:295.9px;top:145.14px;font-size:12px;font-weight:400;color:#b4b4b4;letter-spacing:0.103px;">Clipboard</span>
<span class="t" style="left:433.8px;top:145.14px;font-size:12px;font-weight:400;color:#b4b4b4;letter-spacing:0.192px;">Options</span>
<span class="t" style="left:496.7px;top:145.14px;font-size:12px;font-weight:400;color:#b4b4b4;letter-spacing:0.055px;">Property</span>
<span class="t" style="left:22.8px;top:168.64px;font-size:12px;font-weight:400;color:#a8a8a8;letter-spacing:-0.078px;">Filter objects...</span>
<span class="t" style="left:29.4px;top:193.74px;font-size:12px;font-weight:700;color:#ffffff;letter-spacing:-0.221px;">Coordinate System</span>
<span class="t" style="left:63.7px;top:213.74px;font-size:12px;font-weight:400;color:#f4f4f4;letter-spacing:-0.667px;">WCS</span>
<span class="t" style="left:29.7px;top:233.74px;font-size:12px;font-weight:700;color:#ffffff;letter-spacing:-0.207px;">RailWay</span>
<span class="t" style="left:41.8px;top:253.84px;font-size:12px;font-weight:700;color:#ffffff;letter-spacing:-0.164px;">Alignments</span>
<span class="t" style="left:75.8px;top:273.94px;font-size:12px;font-weight:400;color:#f4f4f4;letter-spacing:-0.318px;">Axis</span>
<span class="t" style="left:512.9px;top:258.74px;font-size:12px;font-weight:400;color:#f0f0f0;letter-spacing:-0.142px;">Representation</span>
<span class="t" style="left:317.4px;top:285.14px;font-size:12px;font-weight:700;color:#ffffff;letter-spacing:-0.020px;">Segments</span>
<span class="t" style="left:317.4px;top:305.14px;font-size:12px;font-weight:400;color:#f0f0f0;letter-spacing:-0.160px;">Segments and vertices</span>
<span class="t" style="left:444.8px;top:287.74px;font-size:12px;font-weight:400;color:#f0f0f0;letter-spacing:0.115px;">Line width</span>
<span class="t" style="left:444.8px;top:319.94px;font-size:12px;font-weight:400;color:#f0f0f0;letter-spacing:-0.193px;">Transparency</span>
<span class="t" style="left:444.8px;top:347.94px;font-size:12px;font-weight:400;color:#f0f0f0;letter-spacing:0.043px;">Arrows</span>
<span class="t" style="left:532.6px;top:347.94px;font-size:12px;font-weight:400;color:#f0f0f0;letter-spacing:-0.230px;">20</span>
<span class="t" style="left:471.4px;top:373.84px;font-size:12px;font-weight:400;color:#f0f0f0;letter-spacing:-0.055px;">Show stations</span>
<span class="t" style="left:471.4px;top:401.84px;font-size:12px;font-weight:400;color:#f0f0f0;letter-spacing:-0.078px;">Show text</span>
<span class="t" style="left:550.9px;top:497.14px;font-size:12px;font-weight:400;color:#f0f0f0;letter-spacing:-0.339px;">...</span>
<span class="t" style="left:1840.8px;top:971.21px;font-size:12.7px;font-weight:400;color:#ffffff;letter-spacing:0.082px;will-change:transform;">Perspective</span>
<span class="t" style="left:1849.8px;top:1002.54px;font-size:12px;font-weight:400;color:#e8e8e8;letter-spacing:-0.833px;">WCS</span>
</div>
</body></html>
